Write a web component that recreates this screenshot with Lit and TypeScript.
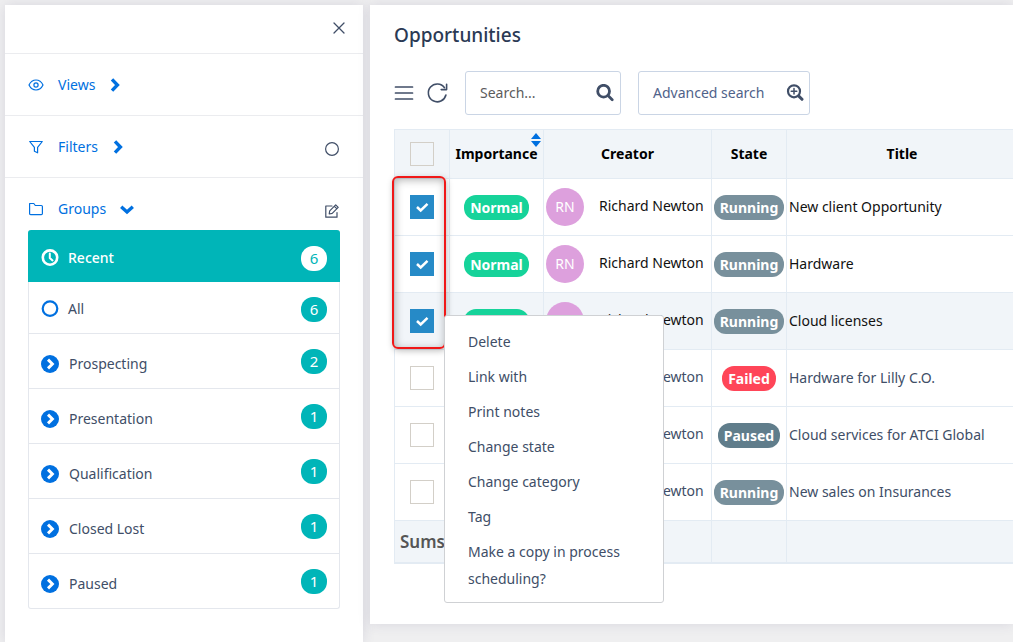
import { LitElement, html, css, svg } from "lit";
import { customElement, state } from "lit/decorators.js";
import { classMap } from "lit/directives/class-map.js";

interface Group {
  name: string;
  count: number;
  kind: "recent" | "all" | "node";
}

interface Opportunity {
  creator: string;
  initials: string;
  importance: string;
  status: "Running" | "Failed" | "Paused";
  title: string;
  selected: boolean;
}

const stroke = (size: number, width: number, body: unknown, box = 24) => html`
  <svg class="icon" width=${size} height=${size} viewBox="0 0 ${box} ${box}" fill="none"
    stroke="currentColor" stroke-width=${width} stroke-linecap="round" stroke-linejoin="round"
    aria-hidden="true">${body}</svg>`;

const icons = {
  close: stroke(12, 1.3, svg`<path d="M1 1l10 10M11 1L1 11"/>`, 12),
  eye: stroke(16, 1.2, svg`<path d="M1 8c1.600-3.300 4.100-5 7-5s5.400 1.700 7 5c-1.600 3.300-4.100 5-7 5S2.600 11.300 1 8z"/><circle cx="8" cy="8" r="2.100"/>`, 16),
  filter: stroke(16, 1.2, svg`<path d="M1.700 2.500h12.600L9.600 8.400v5.400l-3.200-1.600V8.400z"/>`, 16),
  folder: stroke(16, 1.2, svg`<path d="M1.600 2.500h4.200l1.500 2h6q1.100 0 1.100 1.100v7q0 1.100-1.100 1.100H2.700q-1.100 0-1.100-1.100z"/>`, 16),
  right: stroke(14, 3.4, svg`<path stroke-linecap="butt" stroke-linejoin="miter" d="M3 1.400L8.400 7 3 12.600"/>`, 14),
  down: stroke(14, 3.4, svg`<path stroke-linecap="butt" stroke-linejoin="miter" d="M1.200 4.800L7 10l5.800-5.200"/>`, 14),
  ring: stroke(16, 1.2, svg`<circle cx="8" cy="8" r="6.400"/>`, 16),
  edit: stroke(16, 1.2, svg`<path d="M8 3H1.800v11.200H13V9.500"/><path d="M5.700 7.900l6-6 2.500 2.500-6 6-3 .6zM10.400 3.300l2.400 2.400"/>`, 16),
  menu: stroke(20, 1.7, svg`<path d="M1.500 4h17M1.500 10h17M1.500 16h17"/>`, 20),
  refresh: stroke(22, 1.6, svg`<path d="M18.500 5.700A8.900 8.900 0 1 0 19.900 13"/><path d="M20.600 2.300v5.300h-5.400"/>`, 22),
  search: stroke(18, 2.8, svg`<circle cx="7.600" cy="7.200" r="5.900"/><path d="M12 11.600l4.200 4.200"/>`, 18),
  searchPlus: stroke(18, 2.2, svg`<circle cx="8" cy="7.300" r="6"/><path stroke-width="3" d="M12.800 12.100l3.200 3.200"/><path stroke-width="1.500" d="M5.200 7.300h5.600M8 4.500v5.600"/>`, 18),
  recent: stroke(18, 2.6, svg`<circle cx="9" cy="8.600" r="7.200"/><path stroke-width="2" d="M8.800 4.400v4.500l2.700 2.500"/>`, 18),
  all: stroke(18, 2.2, svg`<circle cx="9" cy="8.600" r="7.300"/>`, 18),
  node: html`<svg class="icon" width="18" height="18" viewBox="0 0 18 18" aria-hidden="true">
    <circle cx="9" cy="9" r="9" fill="currentColor"/>
    <path d="M7 4.600l4.400 4.400L7 13.400" fill="none" stroke="#fff" stroke-width="2.900"/></svg>`,
  sort: html`<svg width="12" height="14" viewBox="0 0 12 14" fill="currentColor" aria-hidden="true">
    <path d="M6 0l5 6H1zM6 14l5-6H1z"/></svg>`,
};

@customElement("app-root")
export class AppRoot extends LitElement {
  static styles = css`
    :host {
      display: block;
      box-sizing: border-box;
      min-height: 100vh;
      overflow: hidden;
      background: #efeff0;
      color: #404e67;
      font-family: "Noto Sans", "Open Sans", sans-serif;
      font-size: 14px;
      line-height: 20px;
    }
    * { box-sizing: border-box; }
    svg { display: block; flex: none; }
    button, input { font: inherit; color: inherit; }
    button { padding: 0; border: 0; background: none; cursor: pointer; }
    a { text-decoration: none; color: inherit; }
    .page {
      display: grid;
      grid-template-columns: 358px minmax(0, 1fr);
      gap: 7px;
      min-height: 100vh;
      padding: 5px 0 0 5px;
    }
    .sidebar, .card { background: #fff; box-shadow: 0 0 12px rgba(62, 57, 107, 0.13); }
    .top {
      display: flex;
      justify-content: flex-end;
      align-items: center;
      height: 49px;
      padding: 0 18px 2px;
      border-bottom: 1px solid #ebecef;
    }
    .section {
      display: flex;
      align-items: center;
      justify-content: space-between;
      height: 62px;
      padding: 0 23px;
      border-bottom: 1px solid #ebecef;
    }
    .section.open { height: 52px; padding-top: 10px; border: 0; }
    .toggle { display: flex; align-items: center; gap: 14px; color: #0070e0; }
    .toggle .label { font-size: 14px; }
    .action { padding-top: 4px; }

    .groups {
      margin: 0 23px;
      padding: 0;
      list-style: none;
      border: 1px solid #e4e7ed;
      border-top: 0;
      border-radius: 3px;
    }
    .group { border-top: 1px solid #e4e7ed; }
    .group a {
      display: flex;
      align-items: center;
      height: 54px;
      padding: 0 12px;
    }
    .group.compact a { height: 51px; padding-top: 3px; }
    .group .name { display: flex; flex: 1; align-items: center; gap: 9px; }
    .group.node .name { padding-top: 5px; gap: 10px; }
    .group .icon { color: #0070e0; }
    .group.current {
      margin: 0 -1px;
      padding: 0 1px;
      border: 0;
      border-radius: 3px 3px 0 0;
      background: #00b5b8;
      color: #fff;
      font-weight: 500;
    }
    .group.current a { height: 52px; padding-top: 4px; }
    .group.current .icon { color: #fff; }
    .group.current + .group { border-top: 0; }
    .count {
      width: 26px;
      border-radius: 12px;
      background: #00b5b8;
      color: #fff;
      font-size: 15px;
      line-height: 25px;
      text-align: center;
    }
    .current .count { background: #fff; color: #00b5b8; font-weight: 400; }

    .card {
      position: relative;
      align-self: start;
      padding: 18px 0 60px 24px;
    }
    h1 {
      margin: 0;
      color: #2b3a55;
      font-size: 19px;
      font-weight: 500;
      line-height: 24px;
    }
    .toolbar { display: flex; align-items: center; margin: 24px 0 14px; }
    .toolbar > button + button { margin-left: 12px; }
    .field {
      display: flex;
      align-items: center;
      justify-content: space-between;
      height: 44px;
      border: 1px solid #cad5e5;
      border-radius: 3px;
      background: #fff;
    }
    .find { width: 156px; margin-left: 17px; padding: 0 6px 0 14px; }
    .find input {
      flex: 1;
      min-width: 0;
      padding: 0;
      border: 0;
      outline: 0;
      background: none;
    }
    .find input::placeholder { color: #5c5c5c; opacity: 1; }
    .toolbar > .advanced { width: 172px; margin-left: 17px; padding: 0 5px 0 14px; border: 1px solid #cad5e5; color: #50628a; }
    .advanced .icon, .find .icon { color: #404e67; }

    table {
      width: 100%;
      table-layout: fixed;
      border-collapse: separate;
      border-spacing: 0;
      border-top: 1px solid #e3ebf3;
      border-bottom: 1px solid #e3ebf3;
    }
    th, td {
      padding: 0;
      border-left: 1px solid #e3ebf3;
      border-bottom: 1px solid #e3ebf3;
    }
    .c-check { width: 55px; }
    .c-importance { width: 94px; }
    .c-creator { width: 168px; }
    .c-state { width: 75px; }
    .c-title { padding-left: 4px; }
    thead th {
      position: relative;
      height: 49px;
      background: #f1f5f9;
      color: #000;
      font-weight: 700;
      text-align: center;
    }
    tbody td { height: 57px; text-align: center; }
    tbody .title { padding-left: 2px; text-align: left; }
    .selected { color: #111; }
    .hovered td { background: #f1f5f9; }
    tfoot td, tfoot th { height: 42px; background: #f1f5f9; }
    tfoot th {
      padding-left: 5px;
      color: #555;
      font-size: 17px;
      font-weight: 600;
      text-align: left;
    }
    .sort { position: absolute; top: 3px; right: 1px; color: #0070e0; }
    .box {
      display: block;
      width: 24px;
      height: 24px;
      margin: 0 auto;
      appearance: none;
      border: 1px solid #d3cfc8;
      background: transparent;
    }
    .box:checked {
      border: 0;
      background: #268ac7 url("data:image/svg+xml,%3Csvg xmlns='http://www.w3.org/2000/svg' viewBox='0 0 24 24'%3E%3Cpath d='M7 12l3.700 3.500L17.500 8.800' fill='none' stroke='white' stroke-width='2.500'/%3E%3C/svg%3E");
    }
    .pill {
      display: inline-block;
      padding: 1px 6px 0;
      border-radius: 12px;
      color: #fff;
      font-weight: 700;
      line-height: 24px;
    }
    .normal { background: #16d39a; }
    .running { background: #78909c; }
    .failed { background: #ff4558; }
    .paused { background: #607d8b; }
    .person { display: flex; align-items: center; gap: 15px; padding-left: 2px; white-space: nowrap; }
    .fullname { padding-bottom: 3px; }
    .avatar {
      width: 38px;
      border-radius: 50%;
      background: #dda0dd;
      color: #fff;
      line-height: 38px;
      text-align: center;
    }

    .highlight {
      position: absolute;
      top: 171px;
      left: 22px;
      width: 54px;
      height: 173px;
      border: 2px solid #f01818;
      border-radius: 6px;
      box-shadow: inset 1px 2px 8px rgba(0, 0, 0, 0.3), 1px 2px 6px rgba(0, 0, 0, 0.25);
      pointer-events: none;
    }
    .menu {
      position: absolute;
      top: 310px;
      left: 74px;
      width: 220px;
      margin: 0;
      padding: 8px 0 6px;
      list-style: none;
      border: 1px solid #cfd1d4;
      border-radius: 3px;
      background: #fff;
    }
    .menu button {
      display: block;
      width: 100%;
      padding: 4px 23px;
      line-height: 27px;
      text-align: left;
    }
  `;

  @state() private rows: Opportunity[] = [
    ["Running", "New client Opportunity", true],
    ["Running", "Hardware", true],
    ["Running", "Cloud licenses", true],
    ["Failed", "Hardware for Lilly C.O.", false],
    ["Paused", "Cloud services for ATCI Global", false],
    ["Running", "New sales on Insurances", false],
  ].map(([status, title, selected]) => ({
    creator: "Richard Newton",
    initials: "RN",
    importance: "Normal",
    status,
    title,
    selected,
  })) as Opportunity[];

  private groups: Group[] = [
    { name: "Recent", count: 6, kind: "recent" },
    { name: "All", count: 6, kind: "all" },
    { name: "Prospecting", count: 2, kind: "node" },
    { name: "Presentation", count: 1, kind: "node" },
    { name: "Qualification", count: 1, kind: "node" },
    { name: "Closed Lost", count: 1, kind: "node" },
    { name: "Paused", count: 1, kind: "node" },
  ];

  private actions = [
    "Delete",
    "Link with",
    "Print notes",
    "Change state",
    "Change category",
    "Tag",
    "Make a copy in process scheduling?",
  ];

  private toggleRow(index: number) {
    this.rows = this.rows.map((r, i) => (i === index ? { ...r, selected: !r.selected } : r));
  }

  private renderSidebar() {
    return html`
      <aside class="sidebar">
        <div class="top"><button aria-label="Close">${icons.close}</button></div>
        <div class="section">
          <button class="toggle">${icons.eye}<span class="label">Views</span>${icons.right}</button>
        </div>
        <div class="section">
          <button class="toggle">${icons.filter}<span class="label">Filters</span>${icons.right}</button>
          <button class="action" aria-label="Clear filters">${icons.ring}</button>
        </div>
        <div class="section open">
          <button class="toggle">${icons.folder}<span class="label">Groups</span>${icons.down}</button>
          <button class="action" aria-label="Edit groups">${icons.edit}</button>
        </div>
        <ul class="groups">
          ${this.groups.map((g) => html`
            <li class=${classMap({
              group: true,
              current: g.kind === "recent",
              compact: g.kind === "all",
              node: g.kind === "node",
            })}>
              <a href="#">
                <span class="name">${icons[g.kind]}<span>${g.name}</span></span>
                <span class="count">${g.count}</span>
              </a>
            </li>`)}
        </ul>
      </aside>`;
  }

  private renderTable() {
    return html`
      <table>
        <thead>
          <tr>
            <th class="c-check"><input class="box" type="checkbox" aria-label="Select all" /></th>
            <th class="c-importance">Importance<button class="sort" aria-label="Sort by importance">${icons.sort}</button></th>
            <th class="c-creator">Creator</th>
            <th class="c-state">State</th>
            <th class="c-title">Title</th>
          </tr>
        </thead>
        <tbody>
          ${this.rows.map((r, i) => html`
            <tr class=${classMap({ selected: r.selected, hovered: i === 2 })}>
              <td><input class="box" type="checkbox" aria-label=${`Select ${r.title}`}
                .checked=${r.selected} @change=${() => this.toggleRow(i)} /></td>
              <td><span class="pill normal">${r.importance}</span></td>
              <td><div class="person"><span class="avatar">${r.initials}</span><span class="fullname">${r.creator}</span></div></td>
              <td><span class="pill ${r.status.toLowerCase()}">${r.status}</span></td>
              <td class="title">${r.title}</td>
            </tr>`)}
        </tbody>
        <tfoot>
          <tr><th scope="row">Sums</th><td></td><td></td><td></td><td></td></tr>
        </tfoot>
      </table>`;
  }

  render() {
    return html`
      <div class="page">
        ${this.renderSidebar()}
        <main class="card">
          <h1>Opportunities</h1>
          <div class="toolbar">
            <button aria-label="Menu">${icons.menu}</button>
            <button aria-label="Refresh">${icons.refresh}</button>
            <div class="field find">
              <input type="text" placeholder="Search..." aria-label="Search" />
              <button aria-label="Run search">${icons.search}</button>
            </div>
            <button class="field advanced"><span>Advanced search</span>${icons.searchPlus}</button>
          </div>
          ${this.renderTable()}
          <div class="highlight"></div>
          <ul class="menu">
            ${this.actions.map((a) => html`<li><button>${a}</button></li>`)}
          </ul>
        </main>
      </div>`;
  }
}
